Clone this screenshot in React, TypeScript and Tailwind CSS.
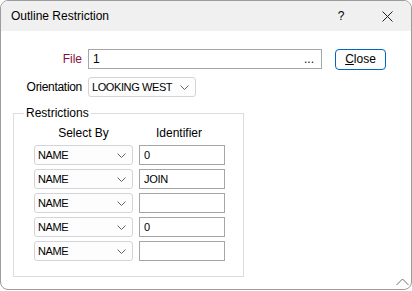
import React from 'react'

const font = { fontFamily: '"Liberation Sans", Arial, sans-serif' }

function Chevron() {
  return (
    <svg width="9" height="5" viewBox="0 0 9 5" className="shrink-0">
      <polyline points="0.5,0.5 4.5,4.5 8.5,0.5" fill="none" stroke="#606060" strokeWidth="1" />
    </svg>
  )
}

function Select({ value, width }: { value: string; width: string }) {
  return (
    <div className={`${width} h-[20px] flex items-center justify-between pl-[3px] pr-[6px] bg-[#fdfdfd] border border-[#d4d4d4] rounded-[3px] text-black`}>
      <span className="whitespace-nowrap text-[11px] tracking-[-0.4px]">{value}</span>
      <Chevron />
    </div>
  )
}

function TextBox({ value }: { value: string }) {
  return (
    <div className="w-[86px] h-[20px] flex items-center pl-[4px] bg-white border border-[#a6a6a6] text-[11px] tracking-[-0.3px]">
      {value}
    </div>
  )
}

export default function App() {
  const rows = ['0', 'JOIN', '', '0', '']

  return (
    <div className="w-[412px] h-[291px] bg-white text-[12px] text-black" style={font}>
      <div className="w-[412px] h-[290px] flex flex-col border border-[#9c9c9c] rounded-[8px] overflow-hidden bg-white">
        {/* title bar */}
        <div className="h-[30px] shrink-0 flex items-center bg-[#f0f0f0] pl-[10px]">
          <span className="flex-1">Outline Restriction</span>
          <span className="w-[12px] text-center mr-[35px]">?</span>
          <svg width="11" height="11" viewBox="0 0 11 11" className="mr-[18px]">
            <path d="M0.5 0.5 L10.5 10.5 M10.5 0.5 L0.5 10.5" stroke="#202020" strokeWidth="1" />
          </svg>
        </div>

        {/* body */}
        <div className="relative flex-1 pt-[18px]">
          <div className="flex items-center h-[20px]">
            <div className="w-[81px] text-right text-[#8a0f3f]">File</div>
            <div className="ml-[6px] w-[234px] h-[20px] flex items-center justify-between pl-[4px] pr-[7px] border border-[#a6a6a6]">
              <span>1</span>
              <span>...</span>
            </div>
            <button className="ml-[13px] w-[51px] h-[21px] flex items-center justify-center border border-[#0067c0] rounded-[4px] bg-[#fdfdfd]">
              <span className="underline">C</span>lose
            </button>
          </div>

          <div className="flex items-center h-[20px] mt-[8px]">
            <div className="w-[81px] text-right tracking-[-0.3px]">Orientation</div>
            <div className="ml-[6px]">
              <Select value="LOOKING WEST" width="w-[108px]" />
            </div>
          </div>

          <fieldset className="ml-[12px] mt-[8px] w-[231px] h-[172px] border border-[#dcdcdc] pt-[4px]">
            <legend className="ml-[10px] px-[2px] leading-[16px]">Restrictions</legend>
            <div className="pl-[20px]">
              <div className="flex leading-[16px]">
                <div className="w-[99px] text-center">Select By</div>
                <div className="ml-[7px] w-[86px] text-center pr-[8px]">Identifier</div>
              </div>
              <div className="flex flex-col gap-[4px] mt-[4px]">
                {rows.map((v, i) => (
                  <div key={i} className="flex items-center gap-[6px]">
                    <Select value="NAME" width="w-[99px]" />
                    <TextBox value={v} />
                  </div>
                ))}
              </div>
            </div>
          </fieldset>

          {/* size grip */}
          <svg width="13" height="8" viewBox="0 0 13 8" className="absolute right-[2px] bottom-[3px]">
            <polyline points="0.5,7 6.5,1 12.5,7" fill="none" stroke="#707070" strokeWidth="1" />
          </svg>
        </div>
      </div>
    </div>
  )
}
